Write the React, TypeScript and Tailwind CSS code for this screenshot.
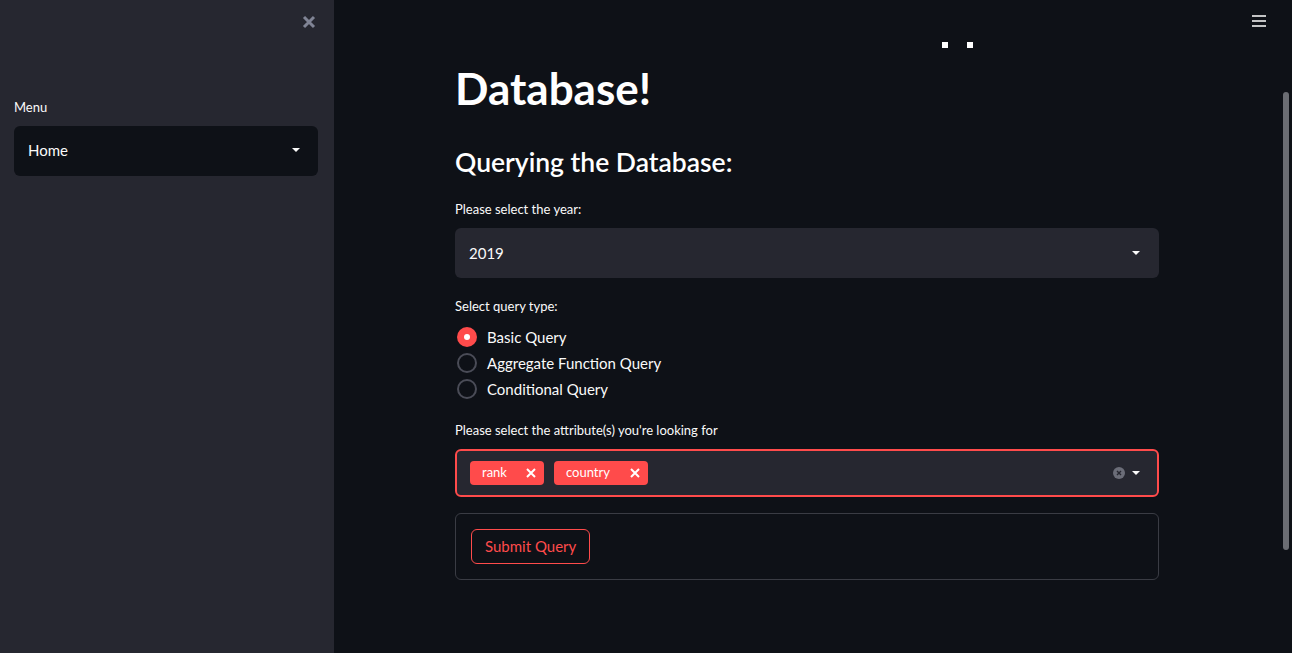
import React from 'react';

const Caret = () => (
  <svg width="10" height="6" viewBox="0 0 10 6" className="fill-current">
    <path d="M1 1h8L5 5z" />
  </svg>
);

const Radio = ({ label, checked }: { label: string; checked?: boolean }) => (
  <div className="flex items-center h-[26px]">
    {checked ? (
      <div className="w-5 h-5 ml-[2px] rounded-full bg-[#ff4b4b] flex items-center justify-center">
        <div className="w-[6px] h-[6px] rounded-full bg-white" />
      </div>
    ) : (
      <div className="w-5 h-5 ml-[2px] rounded-full border-2 border-[#4a4c57]" />
    )}
    <span className="ml-[10px] text-[15px] text-[#fafafa]">{label}</span>
  </div>
);

const Tag = ({ label, width }: { label: string; width: string }) => (
  <div className={`flex items-center justify-between h-6 rounded-[4px] bg-[#ff4b4b] pl-3 pr-[8px] text-[13px] text-white ${width}`}>
    <span>{label}</span>
    <svg width="10" height="10" viewBox="0 0 10 10" stroke="white" strokeWidth="2">
      <path d="M1 1l8 8M9 1l-8 8" />
    </svg>
  </div>
);

const App = () => {
  const labelCls = 'text-[13px] text-[#fafafa]';

  return (
    <div className="flex w-[1292px] h-[653px] overflow-hidden bg-[#0e1117] text-[#fafafa] font-['Lato',sans-serif]">
      {/* Sidebar */}
      <aside className="relative w-[334px] shrink-0 bg-[#262730] pl-[14px] pr-4 pt-[98px]">
        <svg className="absolute left-[302px] top-[15px]" width="14" height="14" viewBox="0 0 14 14" stroke="#808495" strokeWidth="3">
          <path d="M2 2l10 10M12 2L2 12" />
        </svg>
        <div className={`${labelCls} h-[18px] leading-[18px]`}>Menu</div>
        <div className="mt-[10px] h-[50px] rounded-[6px] bg-[#0e1117] flex items-center justify-between pl-[14px] pr-[17px] pb-[2px]">
          <span className="text-[15px] leading-[18px]">Home</span>
          <Caret />
        </div>
      </aside>

      {/* Main */}
      <main className="relative flex-1">
        <div className="absolute left-[608px] top-[42px] w-[6px] h-[6px] bg-white" />
        <div className="absolute left-[633px] top-[42px] w-[6px] h-[6px] bg-white" />
        <svg className="absolute left-[918px] top-[14px]" width="14" height="14" viewBox="0 0 14 14" stroke="white" strokeWidth="1.6">
          <path d="M0 2h14M0 7h14M0 12h14" />
        </svg>
        <div className="absolute left-[949px] top-[92px] w-[6px] h-[458px] rounded-full bg-[#6b6d73]" />

        <div className="ml-[121px] w-[704px] pt-[62px]">
          <h1 className="text-[44px] leading-[52px] font-bold text-white">Database!</h1>
          <h2 className="mt-[31px] text-[26.5px] leading-[34px] font-semibold text-white">Querying the Database:</h2>

          <div className={`${labelCls} mt-[21px] h-[18px] leading-[18px]`}>Please select the year:</div>
          <div className="mt-[10px] h-[50px] rounded-[6px] bg-[#262730] flex items-center justify-between pl-[14px] pr-[18px]">
            <span className="text-[15px]">2019</span>
            <Caret />
          </div>

          <div className={`${labelCls} mt-[19px] h-[18px] leading-[18px]`}>Select query type:</div>
          <div className="mt-[9px] flex flex-col">
            <Radio label="Basic Query" checked />
            <Radio label="Aggregate Function Query" />
            <Radio label="Conditional Query" />
          </div>

          <div className={`${labelCls} mt-[19px] h-[18px] leading-[18px]`}>Please select the attribute(s) you're looking for</div>
          <div className="mt-[10px] h-12 rounded-[6px] border-2 border-[#ff4b4b] bg-[#262730] flex items-center pl-[13px] pr-[16px]">
            <div className="flex gap-[10px]">
              <Tag label="rank" width="w-[74px]" />
              <Tag label="country" width="w-[94px]" />
            </div>
            <div className="ml-auto flex items-center gap-[6px]">
              <svg width="12" height="12" viewBox="0 0 12 12">
                <circle cx="6" cy="6" r="6" fill="#6b6d78" />
                <path d="M4 4l4 4M8 4l-4 4" stroke="#262730" strokeWidth="1.4" />
              </svg>
              <Caret />
            </div>
          </div>

          <div className="mt-4 h-[67px] rounded-[6px] border border-[#3a3c44] px-[15px] flex items-center">
            <button className="h-[35px] px-[13px] rounded-[6px] border border-[#ff4b4b] text-[15px] text-[#ff4b4b] bg-transparent">
              Submit Query
            </button>
          </div>
        </div>
      </main>
    </div>
  );
};

export default App;
